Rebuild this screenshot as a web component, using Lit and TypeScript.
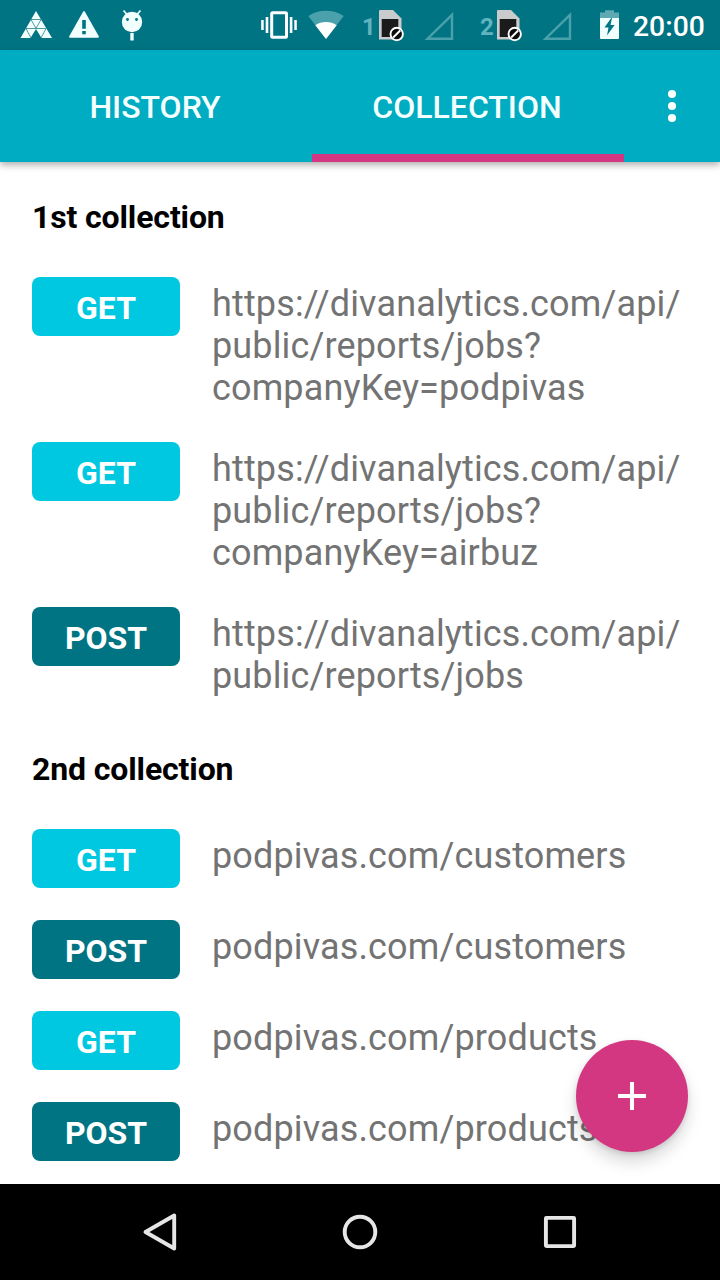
import { LitElement, html, css, svg } from "lit";
import { customElement, property } from "lit/decorators.js";
import { classMap } from "lit/directives/class-map.js";

type Request = { method: "GET" | "POST"; url: string[] };
type Collection = { name: string; requests: Request[] };

const API = "https://divanalytics.com/api/";

const COLLECTIONS: Collection[] = [
  {
    name: "1st collection",
    requests: [
      { method: "GET", url: [API, "public/reports/jobs?", "companyKey=podpivas"] },
      { method: "GET", url: [API, "public/reports/jobs?", "companyKey=airbuz"] },
      { method: "POST", url: [API, "public/reports/jobs"] },
    ],
  },
  {
    name: "2nd collection",
    requests: [
      { method: "GET", url: ["podpivas.com/customers"] },
      { method: "POST", url: ["podpivas.com/customers"] },
      { method: "GET", url: ["podpivas.com/products"] },
      { method: "POST", url: ["podpivas.com/products"] },
    ],
  },
];

// Status icons share one coordinate system: x runs along the bar, y is 0..50.
const strip = (from: number, to: number, body: unknown) => html`<svg
  width=${to - from}
  height="50"
  viewBox="${from} 0 ${to - from} 50"
>
  ${body}
</svg>`;

const sim = svg`
  <path d="M380 10H393L401.5 18.500V39.500H379V11Q379 10 380 10Z" fill="#c9cbcc"/>
  <rect x="381.700" y="19" width="16.600" height="18" fill="#1b1b1b"/>
  <circle cx="396.700" cy="34" r="6.200" fill="#0c0c0c" stroke="#fff" stroke-width="1.900"/>
  <path d="M393.200 37.500L400.200 30.500" stroke="#fff" stroke-width="1.900"/>`;

const signal = svg`<path d="M427.500 38.700H452V14.800Z" fill="none" stroke="#4aa0ab" stroke-width="2.400"/>`;

@customElement("status-bar")
export class StatusBar extends LitElement {
  static styles = css`
    :host {
      display: flex;
      height: 50px;
      background: #007483;
      color: #fff;
      font-family: Roboto, sans-serif;
    }
    svg {
      display: block;
      flex: none;
    }
    .slot {
      box-sizing: border-box;
      width: 16px;
      padding-left: 3px;
      flex: none;
      font-weight: 700;
      font-size: 24px;
      line-height: 55px;
      color: #62b3bf;
    }
    .time {
      margin-left: 7px;
      font-weight: 500;
      font-size: 28.300px;
      line-height: 53px;
    }
  `;

  render() {
    return html`
      ${strip(0, 60, svg`
        <path d="M36 11L52 38H41.500L36 29L30.500 38H20.500Z" fill="#f2ffff"/>
        <path d="M31 19.500H41L36 28.500L31 19.500M26 28.500H46M26 28.500L31 38M46 28.500L41 38" fill="none" stroke="#28808b" stroke-width="0.800"/>`)}
      ${strip(60, 108, svg`
        <path d="M84 12L98 36.800H70Z" fill="#f2ffff" stroke="#f2ffff" stroke-width="1.800" stroke-linejoin="round"/>
        <path d="M82.200 20H85.800V28.700H82.200ZM82.200 31H85.800V34.200H82.200Z" fill="#007483"/>`)}
      ${strip(108, 250, svg`
        <circle cx="132" cy="22" r="10.200" fill="#f2ffff"/>
        <path d="M123.500 10.500L127 14.500M140.500 10.500L137 14.500" stroke="#f2ffff" stroke-width="1.800"/>
        <path d="M130.300 33H133.700V40.500H130.300Z" fill="#f2ffff"/>
        <circle cx="127.500" cy="19.500" r="1.400" fill="#007483"/>
        <circle cx="136.500" cy="19.500" r="1.400" fill="#007483"/>`)}
      ${strip(250, 302, svg`
        <rect x="271.700" y="12.700" width="14.800" height="24.600" rx="1" fill="none" stroke="#fff" stroke-width="3"/>
        <path d="M261.200 20H263.700V30H261.200ZM265.700 17H268.300V33H265.700ZM289.800 17H292.400V33H289.800ZM294.300 20H296.800V30H294.300Z" fill="#fff"/>`)}
      ${strip(302, 359, svg`
        <path d="M326 39L308.300 16Q316 10.800 326 10.800T343.700 16Z" fill="#4aa0ab"/>
        <path d="M326 39L315.300 25.200Q320 22 326 22T336.700 25.200Z" fill="#fff"/>`)}
      <span class="slot">1</span>
      ${strip(375, 477, svg`${sim}${signal}`)}
      <span class="slot">2</span>
      ${strip(375, 477, svg`${sim}${signal}`)}
      ${strip(595, 626, svg`
        <path d="M605 10.300H614V12.500H619V18H600V12.500H605Z" fill="#5fa9b2"/>
        <path d="M600 18H619V38Q619 39 618 39H601Q600 39 600 38Z" fill="#f2ffff"/>
        <path d="M611.200 18L604.500 27.500H608.500L607 35.500L614.600 25H610.500L612 18Z" fill="#007483"/>`)}
      <span class="time">20:00</span>
    `;
  }
}

@customElement("tab-bar")
export class TabBar extends LitElement {
  static styles = css`
    :host {
      display: flex;
      height: 112px;
      position: relative;
      background: #00acc1;
      box-shadow: 0 3px 7px rgba(0, 0, 0, 0.32);
      font-family: Roboto, sans-serif;
    }
    .tab {
      box-sizing: border-box;
      width: 312px;
      border-bottom: 8px solid transparent;
      padding: 5px 2px 0 0;
      display: flex;
      align-items: center;
      justify-content: center;
      color: #f4ffff;
      font-weight: 500;
      font-size: 32px;
    }
    .active {
      border-color: #d33781;
    }
    .tab span {
      display: block;
      padding-top: 5px;
    }
    .menu {
      flex: 1;
      display: flex;
      align-items: center;
      justify-content: center;
    }
  `;

  render() {
    return html`
      ${["HISTORY", "COLLECTION"].map(
        (label) => html`<div class=${classMap({ tab: true, active: label === "COLLECTION" })}>
          <span>${label}</span>
        </div>`
      )}
      <div class="menu">
        <svg width="8" height="32" viewBox="0 0 8 32" fill="#fff">
          <circle cx="4" cy="4" r="4" /><circle cx="4" cy="16" r="4" /><circle cx="4" cy="28" r="4" />
        </svg>
      </div>
    `;
  }
}

@customElement("request-row")
export class RequestRow extends LitElement {
  @property({ attribute: false }) request!: Request;

  static styles = css`
    :host {
      display: flex;
      align-items: flex-start;
      gap: 32px;
      font-family: Roboto, sans-serif;
    }
    .badge {
      flex: none;
      width: 148px;
      height: 59px;
      border-radius: 8px;
      background: #00c8e0;
      color: #fff;
      font-weight: 700;
      font-size: 32px;
      line-height: 63px;
      text-align: center;
    }
    .post {
      background: #007483;
    }
    .url {
      padding: 6px 0 1px;
      font-size: 36px;
      line-height: 42px;
      letter-spacing: 0.140px;
      color: #737373;
      white-space: nowrap;
    }
    .line {
      display: block;
    }
  `;

  render() {
    const { method, url } = this.request;
    return html`
      <div class=${classMap({ badge: true, post: method === "POST" })}>${method}</div>
      <div class="url">${url.map((part) => html`<span class="line">${part}</span>`)}</div>
    `;
  }
}

@customElement("app-root")
export class AppRoot extends LitElement {
  static styles = css`
    :host {
      display: flex;
      flex-direction: column;
      position: relative;
      width: 720px;
      height: 1280px;
      overflow: hidden;
      background: #fff;
      font-family: Roboto, sans-serif;
    }
    .content {
      flex: 1;
      min-height: 0;
      overflow: hidden;
      padding: 36px 32px 0;
      display: flex;
      flex-direction: column;
      gap: 52px;
    }
    .title {
      margin: 0 0 41px;
      font-weight: 700;
      font-size: 32px;
      line-height: 38px;
      letter-spacing: -0.130px;
      color: #000;
    }
    .rows {
      display: flex;
      flex-direction: column;
      gap: 32px;
    }
    .fab {
      position: absolute;
      right: 32px;
      bottom: 128px;
      width: 112px;
      height: 112px;
      border-radius: 50%;
      background: #d33781;
      box-shadow: 0 10px 16px rgba(0, 0, 0, 0.15), 0 2px 5px rgba(0, 0, 0, 0.12);
      display: flex;
      align-items: center;
      justify-content: center;
    }
    .nav {
      height: 96px;
      flex: none;
      background: #000;
      display: flex;
      justify-content: center;
      align-items: center;
      gap: 160px;
    }
    .nav svg {
      fill: none;
      stroke: #e6e6e6;
      stroke-width: 3.900;
      stroke-linejoin: round;
    }
  `;

  render() {
    return html`
      <status-bar></status-bar>
      <tab-bar></tab-bar>
      <main class="content">
        ${COLLECTIONS.map(
          (c) => html`<section>
            <h2 class="title">${c.name}</h2>
            <div class="rows">
              ${c.requests.map((r) => html`<request-row .request=${r}></request-row>`)}
            </div>
          </section>`
        )}
      </main>
      <div class="fab">
        <svg width="28" height="28" viewBox="0 0 28 28">
          <path d="M12 0H16V12H28V16H16V28H12V16H0V12H12Z" fill="#fff" />
        </svg>
      </div>
      <nav class="nav">
        <svg width="40" height="40" viewBox="0 0 40 40"><path d="M5.500 20L34.200 3.500V36.500Z" /></svg>
        <svg width="40" height="40" viewBox="0 0 40 40"><circle cx="20" cy="20" r="15.300" /></svg>
        <svg width="40" height="40" viewBox="0 0 40 40"><rect x="5.900" y="5.900" width="28.200" height="28.200" rx="0.500" /></svg>
      </nav>
    `;
  }
}
